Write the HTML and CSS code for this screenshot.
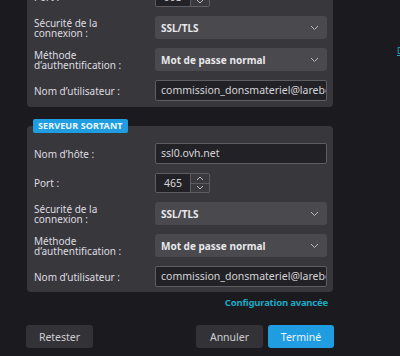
FILE: index.html
```html
<!DOCTYPE html>
<html lang="fr">
<head>
<meta charset="utf-8">
<link rel="stylesheet" href="styles.css">
</head>
<body>
<div class="dialog">
  <div class="panel panel-first">
    <div class="row">
      <div class="label">Port :</div>
      <div class="spinner">
        <span class="spin-value">993</span>
        <span class="spin-btns">
          <span class="spin-btn"><svg width="8" height="5" viewBox="0 0 8 5"><path d="M1 4 L4 1 L7 4" fill="none" stroke="#bdbcc0" stroke-width="1"/></svg></span>
          <span class="spin-btn"><svg width="8" height="5" viewBox="0 0 8 5"><path d="M1 1 L4 4 L7 1" fill="none" stroke="#bdbcc0" stroke-width="1"/></svg></span>
        </span>
      </div>
    </div>
    <div class="row">
      <div class="label">Sécurité de la<br>connexion :</div>
      <div class="select"><span>SSL/TLS</span><svg class="chev" width="9" height="6" viewBox="0 0 9 6"><path d="M1 1 L4.5 4.5 L8 1" fill="none" stroke="#b9b8bc" stroke-width="1"/></svg></div>
    </div>
    <div class="row">
      <div class="label">Méthode<br>d’authentification :</div>
      <div class="select"><span>Mot de passe normal</span><svg class="chev" width="9" height="6" viewBox="0 0 9 6"><path d="M1 1 L4.5 4.5 L8 1" fill="none" stroke="#b9b8bc" stroke-width="1"/></svg></div>
    </div>
    <div class="row">
      <div class="label">Nom d’utilisateur :</div>
      <div class="input">commission_donsmateriel@larebouille.fr</div>
    </div>
  </div>

  <div class="panel panel-second">
    <span class="badge">SERVEUR SORTANT</span>
    <div class="row">
      <div class="label">Nom d’hôte :</div>
      <div class="input">ssl0.ovh.net</div>
    </div>
    <div class="row">
      <div class="label">Port :</div>
      <div class="spinner">
        <span class="spin-value">465</span>
        <span class="spin-btns">
          <span class="spin-btn"><svg width="8" height="5" viewBox="0 0 8 5"><path d="M1 4 L4 1 L7 4" fill="none" stroke="#bdbcc0" stroke-width="1"/></svg></span>
          <span class="spin-btn"><svg width="8" height="5" viewBox="0 0 8 5"><path d="M1 1 L4 4 L7 1" fill="none" stroke="#bdbcc0" stroke-width="1"/></svg></span>
        </span>
      </div>
    </div>
    <div class="row">
      <div class="label">Sécurité de la<br>connexion :</div>
      <div class="select"><span>SSL/TLS</span><svg class="chev" width="9" height="6" viewBox="0 0 9 6"><path d="M1 1 L4.5 4.5 L8 1" fill="none" stroke="#b9b8bc" stroke-width="1"/></svg></div>
    </div>
    <div class="row">
      <div class="label">Méthode<br>d’authentification :</div>
      <div class="select"><span>Mot de passe normal</span><svg class="chev" width="9" height="6" viewBox="0 0 9 6"><path d="M1 1 L4.5 4.5 L8 1" fill="none" stroke="#b9b8bc" stroke-width="1"/></svg></div>
    </div>
    <div class="row">
      <div class="label">Nom d’utilisateur :</div>
      <div class="input">commission_donsmateriel@larebouille.fr</div>
    </div>
  </div>

  <div class="advanced">Configuration avancée</div>

  <div class="actions">
    <button class="btn">Retester</button>
    <span class="spacer"></span>
    <button class="btn">Annuler</button>
    <button class="btn btn-primary">Terminé</button>
  </div>
</div>
<div class="side"><span class="side-link">Documentation</span></div>
</body>
</html>
```
FILE: styles.css
```css
html, body {
  margin: 0;
  padding: 0;
  height: 356px;
  overflow: hidden;
  background: #1b1a1e;
}
body {
  display: flex;
  font-family: "Noto Sans", "DejaVu Sans", sans-serif;
  font-size: 10px;
  color: #dcdcde;
}
.dialog {
  width: 308px;
  margin-left: 26px;
  margin-top: -19px;
  flex: none;
}
.panel {
  position: relative;
  margin: 0 1px;
  background: #38373c;
  border-radius: 4px;
  padding: 6px 6px 6px 7px;
  display: flex;
  flex-direction: column;
  gap: 9px;
}
.panel-second {
  margin-top: 19px;
  padding-top: 17px;
  padding-bottom: 5px;
}
.badge {
  position: absolute;
  left: 6px;
  top: -7px;
  height: 14px;
  line-height: 14px;
  padding: 0 5px;
  background: #1f9de0;
  color: #eaf6fd;
  font-weight: 700;
  font-size: 9px;
  border-radius: 2px;
  letter-spacing: 0.1px;
}
.row {
  display: grid;
  grid-template-columns: 121px 172px;
  align-items: center;
}
.label {
  line-height: 10px;
  color: #dedde0;
}
.select {
  height: 23px;
  box-sizing: border-box;
  background: #4a494e;
  border-radius: 3px;
  display: flex;
  align-items: center;
  justify-content: space-between;
  padding: 0 8px 0 6px;
  font-weight: 700;
  font-size: 10px;
  color: #e8e8ea;
}
.chev {
  display: block;
}
.input {
  height: 21px;
  box-sizing: border-box;
  background: #222125;
  border: 1px solid #5e5d62;
  border-radius: 2px;
  line-height: 19px;
  padding: 0 5px;
  white-space: nowrap;
  overflow: hidden;
  color: #d6d6d8;
  font-size: 10.5px;
}
.spinner {
  width: 55px;
  height: 20px;
  box-sizing: border-box;
  border: 1px solid #5e5d62;
  border-radius: 2px;
  display: flex;
  overflow: hidden;
}
.spin-value {
  width: 34px;
  background: #222125;
  text-align: center;
  line-height: 18px;
  font-size: 10.5px;
  color: #d6d6d8;
  border-right: 1px solid #5e5d62;
}
.spin-btns {
  flex: 1;
  display: flex;
  flex-direction: column;
  background: #3a393e;
}
.spin-btn {
  flex: 1;
  display: flex;
  align-items: center;
  justify-content: center;
}
.spin-btn + .spin-btn {
  border-top: 1px solid #5e5d62;
}
.advanced {
  margin-top: 6px;
  margin-right: 6px;
  text-align: right;
  line-height: 10px;
  font-weight: 700;
  font-size: 9.5px;
  letter-spacing: -0.2px;
  color: #1ca9c4;
}
.actions {
  margin-top: 17px;
  display: flex;
  gap: 5px;
}
.spacer {
  flex: 1;
}
.btn {
  width: 67px;
  height: 23px;
  border: none;
  border-radius: 3px;
  background: #333237;
  color: #cfcfd2;
  font-family: "Noto Sans", "DejaVu Sans", sans-serif;
  font-size: 10.5px;
  padding: 0;
}
.btn-primary {
  width: 66px;
  background: #1f9de0;
  color: #e9f5fc;
}
.side {
  flex: none;
  margin-left: 63px;
  padding-top: 46px;
  white-space: nowrap;
  line-height: 9px;
}
.side-link {
  color: #1ca9c4;
  text-decoration: underline;
  font-size: 9px;
}
```
